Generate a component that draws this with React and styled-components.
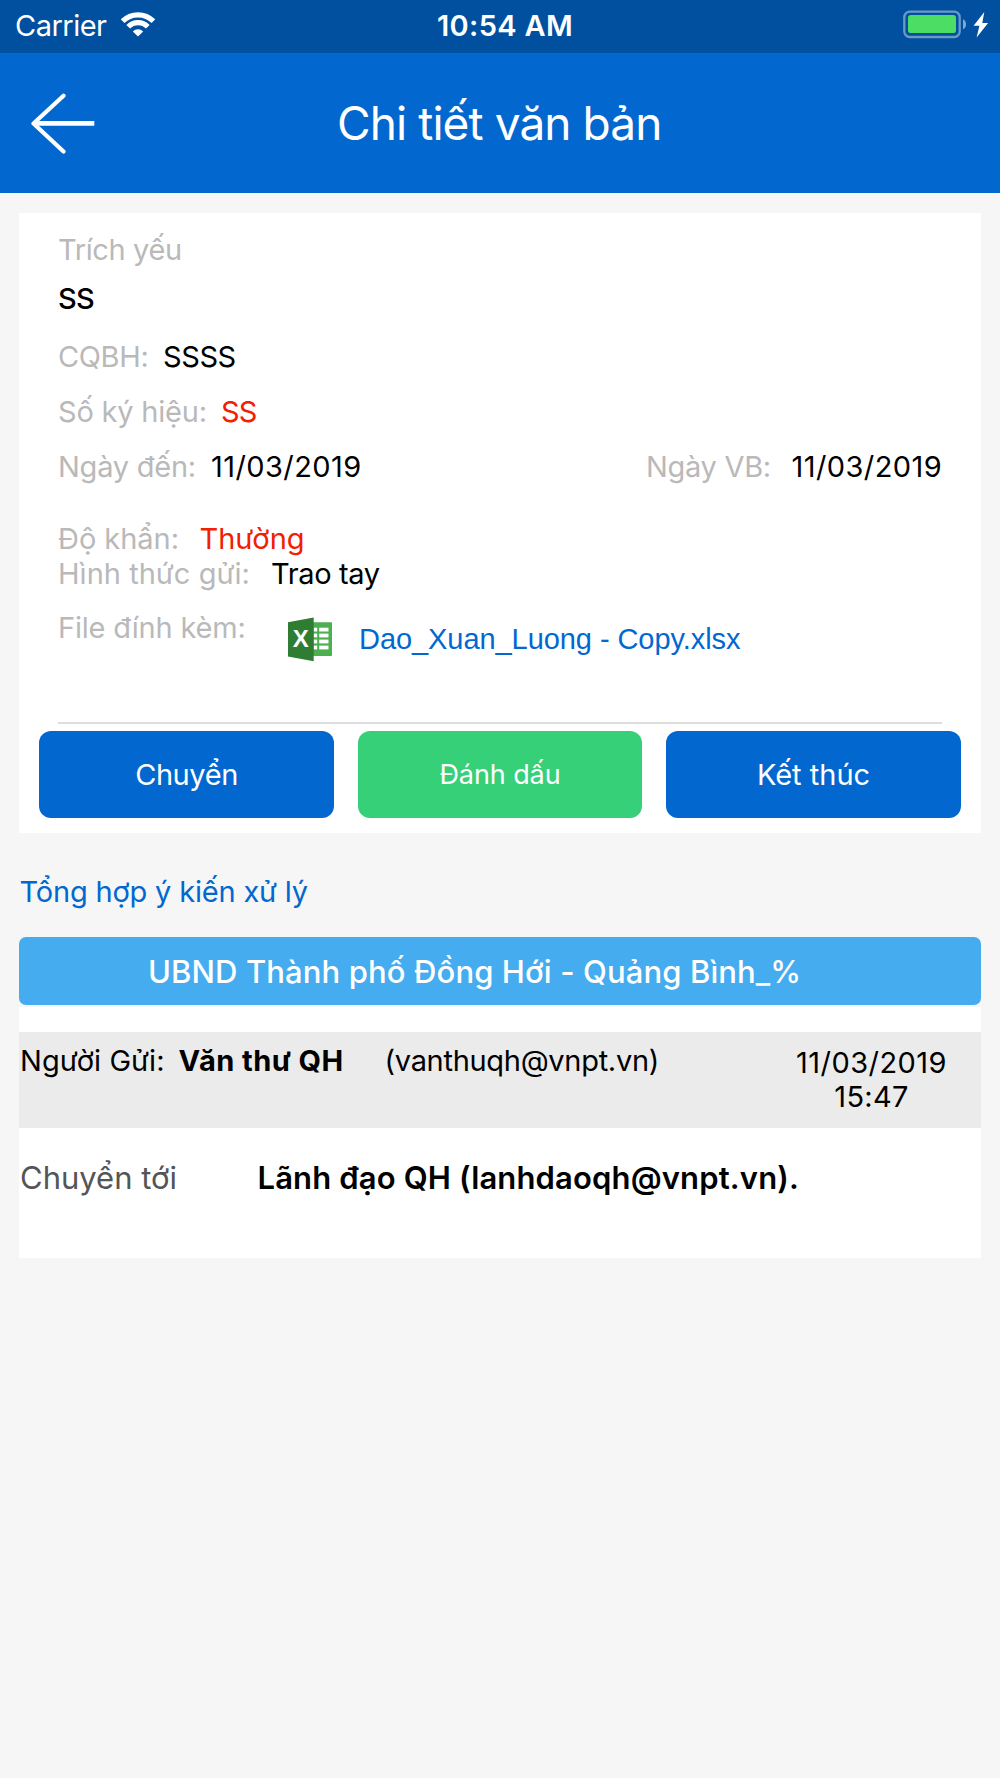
import React from "react";
import styled, { createGlobalStyle } from "styled-components";

const GlobalStyle = createGlobalStyle`
  body {
    margin: 0;
    background: #f6f6f6;
    font-family: Inter, sans-serif;
  }
`;

const Screen = styled.div`
  min-height: 1778px;
  background: #f6f6f6;
`;

/* one run of text: size, weight, colour and tracking vary */
const Text = styled.span`
  flex: none;
  width: ${p => (p.$width ? p.$width + "px" : "auto")};
  font-size: ${p => p.$size || 29}px;
  line-height: ${p => p.$line || 35}px;
  font-weight: ${p => p.$weight || 400};
  letter-spacing: ${p => p.$track || 0}px;
  color: ${p => p.$color || "#000"};
  white-space: nowrap;
`;

const Label = styled(Text)`
  color: #b9b9b9;
`;

const StatusBar = styled.div`
  display: grid;
  grid-template-columns: 437px 466px 1fr;
  height: 53px;
  background: #00509f;
`;

const Carrier = styled.div`
  display: flex;
  align-items: flex-start;
  gap: 14px;
  padding: 8px 0 0 15px;
  svg {
    margin-top: 3px;
  }
`;

const Clock = styled.div`
  padding-top: 8px;
`;

const Power = styled.div`
  padding-top: 10px;
`;

const Header = styled.header`
  display: grid;
  grid-template-columns: 30px 307px 1fr;
  align-items: start;
  height: 140px;
  background: #0268d0;
`;

const BackButton = styled.button`
  grid-column: 2;
  padding: 40px 0 0;
  border: 0;
  background: none;
  text-align: left;
  svg {
    display: block;
  }
`;

const Title = styled.h1`
  margin: 0;
  padding-top: 42px;
  font-size: 46px;
  line-height: 57px;
  font-weight: 400;
  letter-spacing: -0.91px;
  color: #fff;
`;

const Card = styled.section`
  display: flex;
  flex-direction: column;
  box-sizing: border-box;
  height: 620px;
  margin: 20px 19px 0;
  padding-top: 19px;
  background: #fff;
`;

const Row = styled.div`
  display: flex;
  align-items: flex-start;
  height: 35px;
  margin: ${p => p.$gap || 0}px 0 0 39px;
`;

const FileRow = styled(Row)`
  height: 112px;
  margin-right: 39px;
  border-bottom: 2px solid #dddddd;
`;

const ExcelIcon = styled.svg`
  flex: none;
  margin: 7px 27px 0 0;
`;

const FileLink = styled.a`
  padding-top: 13px;
  font-family: "Liberation Sans", sans-serif;
  font-size: 29px;
  line-height: 33px;
  letter-spacing: -0.066px;
  color: #0268d0;
  white-space: nowrap;
`;

const Actions = styled.div`
  display: grid;
  grid-template-columns: 295px 284px 295px;
  gap: 24px;
  margin: 7px 20px 0;
`;

const ActionButton = styled.button`
  height: 87px;
  padding: 0;
  border: 0;
  border-radius: 12px;
  background: ${p => p.$bg || "#0268d0"};
  font-family: inherit;
  font-size: ${p => p.$size || 29}px;
  letter-spacing: ${p => p.$track || 0}px;
  color: #fff;
`;

const SectionTitle = styled.h2`
  margin: 41px 0 28px 19.5px;
  font-size: 29px;
  line-height: 35px;
  font-weight: 400;
  letter-spacing: -0.185px;
  color: #0268d0;
`;

const Banner = styled.div`
  box-sizing: border-box;
  height: 68px;
  margin: 0 19px 2px;
  padding: 16px 0 0 129px;
  border-radius: 7px;
  background: #45acef;
`;

const History = styled.section`
  height: 251px;
  margin: 0 19px;
  padding-top: 25px;
  box-sizing: border-box;
  background: #fff;
`;

const SenderRow = styled.div`
  display: flex;
  align-items: flex-start;
  box-sizing: border-box;
  height: 96px;
  padding: 11px 0 0 1px;
  background: #ebebeb;
`;

const SentAt = styled.div`
  display: flex;
  flex-direction: column;
  align-items: center;
  width: 151px;
  padding-top: 3px;
`;

const ReceiverRow = styled.div`
  display: flex;
  padding: 31px 0 0 1px;
`;

function WifiIcon() {
  return (
    <svg width="36" height="26" viewBox="0 0 36 26">
      <g fill="none" stroke="#fff" strokeWidth="5.2">
        <path d="M2.6 10.2 A21.7 21.7 0 0 1 33.4 10.2" />
        <path d="M8.2 15.8 A13.7 13.7 0 0 1 27.8 15.8" />
      </g>
      <path d="M18 25.6 L12.8 20.4 A7.4 7.4 0 0 1 23.2 20.4 Z" fill="#fff" />
    </svg>
  );
}

function BatteryIcon() {
  return (
    <svg width="88" height="30" viewBox="0 0 88 30">
      <rect x="1.3" y="1.7" width="55.4" height="25.3" rx="5.5" fill="none" stroke="#fff" strokeOpacity="0.42" strokeWidth="2.3" />
      <rect x="5" y="5" width="48" height="18" rx="2.8" fill="#4cdd64" />
      <path d="M60 9.2 C64 10.5 64 18 60 19.3 Z" fill="#fff" fillOpacity="0.5" />
      <path d="M81.3 2 L70.6 15.8 H76.4 L73.6 27.5 L85.1 13 H79.3 Z" fill="#fff" />
    </svg>
  );
}

function BackArrow() {
  return (
    <svg width="66" height="62" viewBox="0 0 66 62">
      <g fill="none" stroke="#fff" strokeWidth="4.2">
        <path d="M33.5 2.7 L3.5 30.5 L33.5 58.5" strokeLinecap="round" strokeLinejoin="round" />
        <path d="M5 30.4 H64.3" strokeWidth="4.6" />
      </g>
    </svg>
  );
}

// [x, y, width] of the spreadsheet cells
const cells = [10.7, 16.6, 22.6, 28.6].flatMap(y => [
  [25.5, y, 3.7],
  [31.2, y, 9.3]
]);

function App() {
  return (
    <Screen>
      <GlobalStyle />
      <StatusBar>
        <Carrier>
          <Text $color="#fff" $track={-0.52}>Carrier</Text>
          <WifiIcon />
        </Carrier>
        <Clock>
          <Text $color="#fff" $weight={600} $track={0.34}>10:54 AM</Text>
        </Clock>
        <Power>
          <BatteryIcon />
        </Power>
      </StatusBar>

      <Header>
        <BackButton>
          <BackArrow />
        </BackButton>
        <Title>Chi tiết văn bản</Title>
      </Header>

      <Card>
        <Row>
          <Label $track={-0.37}>Trích yếu</Label>
        </Row>
        <Row $gap={14}>
          <Text $weight={500} $track={-0.7}>SS</Text>
        </Row>
        <Row $gap={23}>
          <Label $width={105} $track={-0.37}>CQBH:</Label>
          <Text $track={-0.4}>SSSS</Text>
        </Row>
        <Row $gap={20}>
          <Label $width={163} $track={-0.2}>Số ký hiệu:</Label>
          <Text $color="#f02000" $track={-0.9}>SS</Text>
        </Row>
        <Row $gap={20}>
          <Label $width={153} $track={-0.24}>Ngày đến:</Label>
          <Text $width={435} $track={0.425}>11/03/2019</Text>
          <Label $width={145.5} $track={-0.3}>Ngày VB:</Label>
          <Text $track={0.425}>11/03/2019</Text>
        </Row>
        <Row $gap={37}>
          <Label $width={141.5} $track={-0.04}>Độ khẩn:</Label>
          <Text $color="#f02000">Thường</Text>
        </Row>
        <Row>
          <Label $width={213} $track={0.03}>Hình thức gửi:</Label>
          <Text $track={-0.37}>Trao tay</Text>
        </Row>
        <FileRow $gap={19}>
          <Label $width={230} $track={-0.2}>File đính kèm:</Label>
          <ExcelIcon width="44" height="45" viewBox="0 0 44 45">
            <rect x="20" y="5.3" width="24" height="33.7" rx="0.8" fill="#4caf50" />
            {cells.map(([x, y, w]) => (
              <rect key={x + "-" + y} x={x} y={y} width={w} height="3.8" fill="#fff" />
            ))}
            <path d="M0 5.2 L25.7 0.5 V44.3 L0 39.4 Z" fill="#2e7d32" />
            <text x="12.7" y="30.4" textAnchor="middle" fontFamily="Liberation Sans" fontWeight="700" fontSize="24" fill="#fff">X</text>
          </ExcelIcon>
          <FileLink>Dao_Xuan_Luong - Copy.xlsx</FileLink>
        </FileRow>
        <Actions>
          <ActionButton $track={-0.42}>Chuyển</ActionButton>
          <ActionButton $bg="#36d079" $size={27} $track={-0.1}>Đánh dấu</ActionButton>
          <ActionButton>Kết thúc</ActionButton>
        </Actions>
      </Card>

      <SectionTitle>Tổng hợp ý kiến xử lý</SectionTitle>
      <Banner>
        <Text $color="#fff" $size={31} $line={37} $weight={500} $track={0.12}>
          UBND Thành phố Đồng Hới - Quảng Bình_%
        </Text>
      </Banner>
      <History>
        <SenderRow>
          <Text $width={158.5} $track={0.05}>Người Gửi:</Text>
          <Text $width={206} $weight={700} $track={0.45}>Văn thư QH</Text>
          <Text $width={411.5} $track={-0.3}>(vanthuqh@vnpt.vn)</Text>
          <SentAt>
            <Text $line={34} $track={0.43}>11/03/2019</Text>
            <Text $line={34} $track={0.3}>15:47</Text>
          </SentAt>
        </SenderRow>
        <ReceiverRow>
          <Text $color="#555" $width={237.5} $size={31} $line={37}>Chuyển tới</Text>
          <Text $size={31} $line={37} $weight={600} $track={0.146}>
            Lãnh đạo QH (lanhdaoqh@vnpt.vn).
          </Text>
        </ReceiverRow>
      </History>
    </Screen>
  );
}

export default App;
